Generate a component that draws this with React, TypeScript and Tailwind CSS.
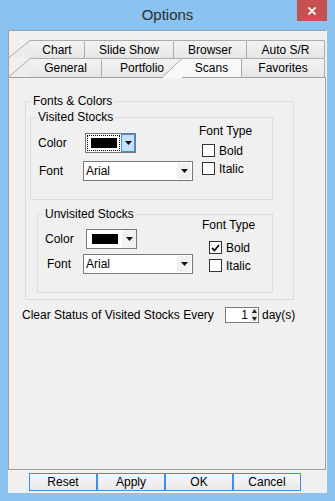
import type { ReactNode } from "react";

export default function App() {
  return (
    <div className="flex h-[501px] w-[335px] flex-col bg-[#8ac2f0] px-[8px] pb-[8px] font-['Liberation_Sans',Arial,sans-serif] text-[12px] leading-[14px] text-black">
      <div className="relative flex h-[30px] shrink-0 justify-center pt-[6px]">
        <span className="text-[15px] leading-[18px] text-[#2d2d2d]">Options</span>
        <div className="absolute right-0 top-0 flex h-[21px] w-[30px] items-center justify-center bg-[#c75050]">
          <svg width="8" height="8" viewBox="0 0 8 8">
            <path d="M0.5 0.5L7.5 7.5M7.5 0.5L0.5 7.5" stroke="#fff" strokeWidth="1.8" />
          </svg>
        </div>
      </div>

      <div className="flex flex-1 flex-col bg-[#f0f0f0]">
        <div className="flex h-[440px] w-[318px] flex-col border-l border-t border-[#a0a0a0] pt-[9px]">
          <div className="flex h-[18px]">
            <Tab label="Chart" className="w-[76px]" slant={<Slant w={21} h={18} />} />
            <Tab label="Slide Show" className="w-[89px]" />
            <Tab label="Browser" className="w-[73px]" />
            <Tab label="Auto S/R" className="w-[78px]" />
          </div>
          <div className="relative z-10 flex h-[19px] items-start">
            <Tab label="General" className="h-[19px] w-[93px]" slant={<Slant w={21} h={19} />} />
            <Tab label="Portfolio" className="h-[19px] w-[80px]" noRight />
            <Tab
              label="Scans"
              className="-ml-[19px] h-[20px] w-[79px]"
              active
              slant={<Slant w={19} h={19} active />}
            />
            <Tab label="Favorites" className="h-[19px] w-[83px]" />
          </div>

          <div className="flex flex-1 flex-col border-b border-r border-t border-[#a0a0a0] bg-[#f0f0f0]">
            <fieldset className="ml-[16px] mt-[16px] h-[206px] w-[269px] border border-[#dcdcdc]">
              <legend className="ml-[5px] px-[2px] leading-[14px]">Fonts &amp; Colors</legend>

              <fieldset className="ml-[4px] mt-[2px] h-[90px] w-[243px] border border-[#dcdcdc]">
                <legend className="ml-[5px] px-[2px] leading-[14px]">Visited Stocks</legend>
                <div className="flex">
                  <div className="flex flex-col pt-[9px]">
                    <div className="flex h-[20px] items-center">
                      <span className="ml-[7px] w-[47px]">Color</span>
                      <ColorCombo focused />
                    </div>
                    <div className="mt-[8px] flex h-[20px] items-center">
                      <span className="ml-[8px] w-[44px]">Font</span>
                      <FontCombo />
                    </div>
                  </div>
                  <div className="ml-[6px] flex flex-col">
                    <span>Font Type</span>
                    <CheckRow className="ml-[3px] mt-[6px]" label="Bold" />
                    <CheckRow className="ml-[3px] mt-[5px]" label="Italic" />
                  </div>
                </div>
              </fieldset>

              <fieldset className="ml-[11px] mt-[7px] h-[86px] w-[236px] border border-[#dcdcdc]">
                <legend className="ml-[5px] px-[2px] leading-[14px]">Unvisited Stocks</legend>
                <div className="flex">
                  <div className="flex flex-col pt-[8px]">
                    <div className="flex h-[20px] items-center">
                      <span className="ml-[7px] w-[41px]">Color</span>
                      <ColorCombo />
                    </div>
                    <div className="mt-[5px] flex h-[20px] items-center">
                      <span className="ml-[9px] w-[36px]">Font</span>
                      <FontCombo />
                    </div>
                  </div>
                  <div className="-mt-[3px] ml-[9px] flex flex-col">
                    <span>Font Type</span>
                    <CheckRow className="ml-[7px] mt-[9px]" label="Bold" checked />
                    <CheckRow className="ml-[7px] mt-[5px]" label="Italic" />
                  </div>
                </div>
              </fieldset>
            </fieldset>

            <div className="ml-[13px] mt-[7px] flex h-[16px] items-center">
              <span className="w-[203px]">Clear Status of Visited Stocks Every</span>
              <div className="flex h-[16px] w-[34px] items-center border border-[#7a7a7a] bg-white">
                <span className="flex-1 pr-[3px] text-right">1</span>
                <div className="mr-[1px] flex h-[12px] w-[6px] flex-col items-center justify-between bg-[#e8e8e8]">
                  <svg width="5" height="4" viewBox="0 0 5 4">
                    <path d="M2.5 0L5 4H0z" fill="#222" />
                  </svg>
                  <svg width="5" height="4" viewBox="0 0 5 4">
                    <path d="M0 0h5L2.5 4z" fill="#222" />
                  </svg>
                </div>
              </div>
              <span className="ml-[3px]">day(s)</span>
            </div>
          </div>
        </div>

        <div className="mt-[3px] flex pl-[21px]">
          {["Reset", "Apply", "OK", "Cancel"].map((b) => (
            <button
              key={b}
              className="h-[18px] w-[68px] border border-[#3d8ee6] bg-linear-to-b from-[#f7f7f7] to-[#e9e9e9] text-[12px] leading-[14px]"
            >
              {b}
            </button>
          ))}
        </div>
      </div>
    </div>
  );
}

function Slant({ w, h, active = false }: { w: number; h: number; active?: boolean }) {
  return (
    <svg width={w} height={active ? h + 1 : h} className="shrink-0">
      <polygon
        points={active ? `0,${h} ${w},0 ${w},${h + 1} 0,${h + 1}` : `0,${h} ${w},0 ${w},${h}`}
        fill={active ? "#f8f8f8" : "#ececec"}
      />
      <line x1="0" y1={h - 0.5} x2={w} y2="0.5" stroke="#acacac" />
    </svg>
  );
}

function Tab({
  label,
  className,
  slant,
  active = false,
  noRight = false,
}: {
  label: string;
  className: string;
  slant?: ReactNode;
  active?: boolean;
  noRight?: boolean;
}) {
  return (
    <div className={`flex h-full shrink-0 ${className}`}>
      {slant}
      <div
        className={`flex flex-1 items-center justify-center rounded-tr-[2px] border-t border-[#acacac] ${
          noRight ? "" : "border-r"
        } ${active ? "bg-[#f8f8f8]" : "bg-linear-to-b from-[#f3f3f3] to-[#e6e6e6]"}`}
      >
        {label}
      </div>
    </div>
  );
}

function Arrow() {
  return (
    <svg width="7" height="4" viewBox="0 0 7 4">
      <path d="M0 0h7L3.5 4z" fill="#111" />
    </svg>
  );
}

function ColorCombo({ focused = false }: { focused?: boolean }) {
  return (
    <div className="flex h-[20px] w-[51px] border border-[#7a7a7a] bg-white">
      <div className="flex flex-1 p-[1px]">
        <div
          className={`flex flex-1 items-center justify-center border ${
            focused ? "border-dotted border-black" : "border-transparent"
          }`}
        >
          <div className="h-[10px] w-[26px] bg-black" />
        </div>
      </div>
      {focused ? (
        <div className="flex w-[14px] items-center justify-center border border-[#3c8fe0] bg-[#c5e2fb]">
          <Arrow />
        </div>
      ) : (
        <div className="flex w-[14px] items-center justify-center bg-[#f3f3f3]">
          <Arrow />
        </div>
      )}
    </div>
  );
}

function FontCombo() {
  return (
    <div className="flex h-[20px] w-[110px] border border-[#7a7a7a] bg-white">
      <span className="flex flex-1 items-center pl-[2px]">Arial</span>
      <div className="my-[1px] mr-[1px] flex w-[14px] items-center justify-center bg-[#f1f1f1]">
        <Arrow />
      </div>
    </div>
  );
}

function CheckRow({ label, className, checked = false }: { label: string; className: string; checked?: boolean }) {
  return (
    <div className={`flex h-[13px] items-center gap-[4px] ${className}`}>
      <div className="flex h-[13px] w-[13px] items-center justify-center border border-[#333] bg-white">
        {checked && (
          <svg width="9" height="8" viewBox="0 0 9 8">
            <path d="M1 4l2.5 2.5L8 1" stroke="#111" strokeWidth="1.8" fill="none" />
          </svg>
        )}
      </div>
      <span>{label}</span>
    </div>
  );
}
